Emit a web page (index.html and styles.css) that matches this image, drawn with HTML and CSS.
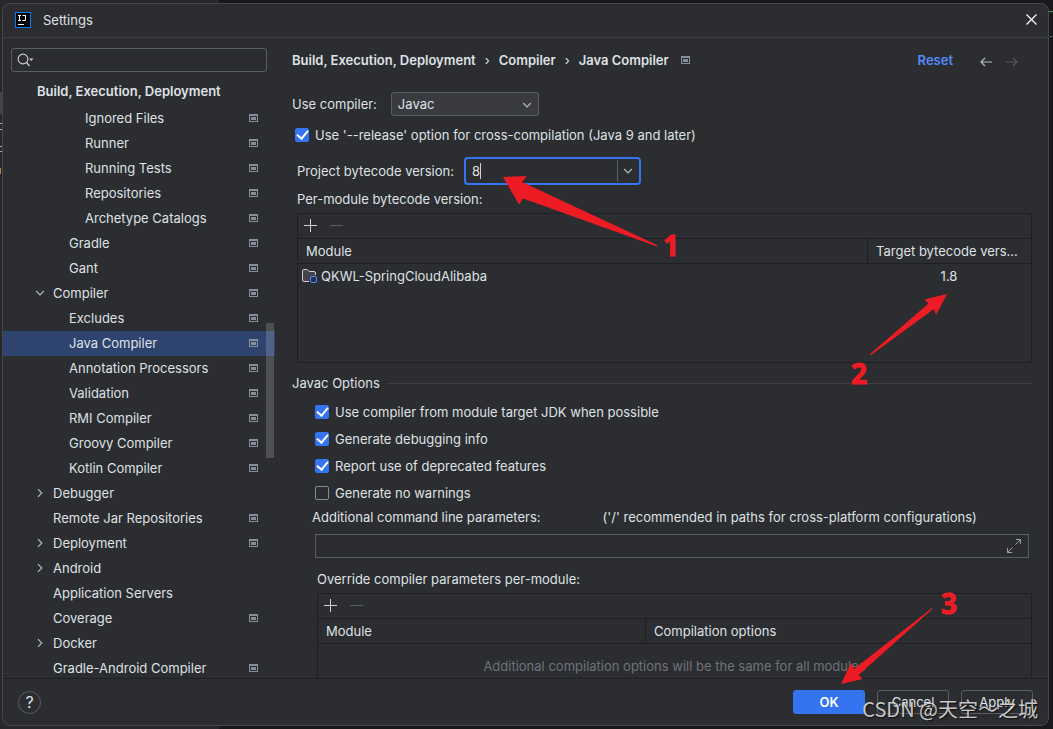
FILE: index.html
```html
<!DOCTYPE html>
<html lang="en">
<head>
<meta charset="utf-8">
<title>Settings</title>
<link rel="stylesheet" href="styles.css">
</head>
<body>
<svg class="defs" aria-hidden="true">
  <symbol id="page" viewBox="0 0 9 8"><path fill="currentColor" fill-rule="evenodd" d="M0 0h9v8H0zM1 2v5h7V2z"/><path fill="currentColor" d="M2 3h5v3H2z"/></symbol>
  <symbol id="right" viewBox="0 0 10 10"><path d="M3 1.2 6.8 5 3 8.8" fill="none" stroke="currentColor" stroke-width="1.2"/></symbol>
  <symbol id="down" viewBox="0 0 10 10"><path d="M1.2 3 5 6.8 8.8 3" fill="none" stroke="currentColor" stroke-width="1.2"/></symbol>
  <symbol id="plus" viewBox="0 0 13 13"><path d="M6.5 0v13M0 6.5h13" stroke="currentColor"/></symbol>
  <symbol id="minus" viewBox="0 0 13 13"><path d="M0 6.5h13" stroke="currentColor"/></symbol>
</svg>
<div class="dialog">
  <header class="titlebar">
    <svg class="logo" viewBox="0 0 16 16"><rect width="16" height="16" fill="#087cfa"/><rect x="1" y="1" width="14" height="14" fill="#000"/><path d="M3 3.500h3M4.500 3.500v4.500M3 8.500h3M7.500 3.500h3.500M10.500 3.500v4q0 1-1 1H7.500M3 12.500h6" fill="none" stroke="#fff" stroke-width="1.100"/></svg>
    <h1>Settings</h1>
    <button class="plain close" aria-label="Close"><svg viewBox="0 0 11 11"><path d="M.5.5l10 10M10.500.500l-10 10" stroke="#fff" stroke-width="1.200"/></svg></button>
  </header>
  <div class="body">
    <nav class="sidebar">
      <label class="search">
        <svg viewBox="0 0 17 14"><circle cx="6" cy="6" r="4.900" fill="none" stroke="#ced0d6" stroke-width="1.100"/><path d="M9.500 9.500l3 3.500" stroke="#ced0d6" stroke-width="1.200"/><path d="M12 5.500h4.500l-2.250 2.500z" fill="#ced0d6"/></svg>
        <input type="text" aria-label="Search settings">
      </label>
      <h2>Build, Execution, Deployment</h2>
      <div class="scroll">
        <ul class="tree">
          <li class="l3"><span>Ignored Files</span><svg class="page"><use href="#page"/></svg></li>
          <li class="l3"><span>Runner</span><svg class="page"><use href="#page"/></svg></li>
          <li class="l3"><span>Running Tests</span><svg class="page"><use href="#page"/></svg></li>
          <li class="l3"><span>Repositories</span><svg class="page"><use href="#page"/></svg></li>
          <li class="l3"><span>Archetype Catalogs</span><svg class="page"><use href="#page"/></svg></li>
          <li class="l2"><span>Gradle</span><svg class="page"><use href="#page"/></svg></li>
          <li class="l2"><span>Gant</span><svg class="page"><use href="#page"/></svg></li>
          <li class="parent"><svg class="chev"><use href="#down"/></svg><span>Compiler</span><svg class="page"><use href="#page"/></svg></li>
          <li class="l2"><span>Excludes</span><svg class="page"><use href="#page"/></svg></li>
          <li class="l2 selected"><span>Java Compiler</span><svg class="page"><use href="#page"/></svg></li>
          <li class="l2"><span>Annotation Processors</span><svg class="page"><use href="#page"/></svg></li>
          <li class="l2"><span>Validation</span><svg class="page"><use href="#page"/></svg></li>
          <li class="l2"><span>RMI Compiler</span><svg class="page"><use href="#page"/></svg></li>
          <li class="l2"><span>Groovy Compiler</span><svg class="page"><use href="#page"/></svg></li>
          <li class="l2"><span>Kotlin Compiler</span><svg class="page"><use href="#page"/></svg></li>
          <li class="parent"><svg class="chev"><use href="#right"/></svg><span>Debugger</span></li>
          <li><span>Remote Jar Repositories</span><svg class="page"><use href="#page"/></svg></li>
          <li class="parent"><svg class="chev"><use href="#right"/></svg><span>Deployment</span><svg class="page"><use href="#page"/></svg></li>
          <li class="parent"><svg class="chev"><use href="#right"/></svg><span>Android</span></li>
          <li><span>Application Servers</span></li>
          <li><span>Coverage</span><svg class="page"><use href="#page"/></svg></li>
          <li class="parent"><svg class="chev"><use href="#right"/></svg><span>Docker</span></li>
          <li><span>Gradle-Android Compiler</span><svg class="page"><use href="#page"/></svg></li>
        </ul>
        <div class="thumb"></div>
      </div>
    </nav>
    <main class="main">
      <div class="crumbs">
        <b>Build, Execution, Deployment</b><i>›</i><b>Compiler</b><i>›</i><b>Java Compiler</b>
        <svg class="page"><use href="#page"/></svg>
        <a class="reset" href="#">Reset</a>
        <button class="plain" aria-label="Back"><svg class="arrow" viewBox="0 0 12 10"><path d="M12 5H1M5 1 1 5l4 4" fill="none" stroke="#b4b8bf" stroke-width="1.200"/></svg></button>
        <button class="plain" aria-label="Forward"><svg class="arrow" viewBox="0 0 12 10"><path d="M0 5h11M7 1l4 4-4 4" fill="none" stroke="#55575c" stroke-width="1.200"/></svg></button>
      </div>
      <div class="row compiler">
        <label for="compiler">Use compiler:</label>
        <span class="select"><select id="compiler"><option>Javac</option></select><svg class="chev"><use href="#down"/></svg></span>
      </div>
      <label class="check release"><input type="checkbox" checked>Use '--release' option for cross-compilation (Java 9 and later)</label>
      <div class="row project">
        <label for="version">Project bytecode version:</label>
        <span class="combo"><input id="version" type="text" value="8"><span class="caret"></span><button class="plain" aria-label="Show versions"><svg class="chev"><use href="#down"/></svg></button></span>
      </div>
      <p class="caption">Per-module bytecode version:</p>
      <section class="panel modules">
        <div class="tools"><button class="plain" aria-label="Add module"><svg><use href="#plus"/></svg></button><button class="plain off" aria-label="Remove module"><svg><use href="#minus"/></svg></button></div>
        <table>
          <thead><tr><th>Module</th><th class="target">Target bytecode vers...</th></tr></thead>
          <tbody><tr><td><span class="module"><svg viewBox="0 0 16 16"><path d="M7 13.500H2q-1.500 0-1.500-1.500V3Q.5 1.500 2 1.500h3.200l2 2H12q1.500 0 1.500 1.500v2" fill="#43454a" stroke="#ced0d6"/><rect x="8.500" y="8.500" width="6" height="6" rx="1.500" fill="#25324d" stroke="#548af7"/></svg>QKWL-SpringCloudAlibaba</span></td><td class="center">1.8</td></tr></tbody>
        </table>
      </section>
      <h3><span>Javac Options</span></h3>
      <div class="checks">
        <label class="check"><input type="checkbox" checked>Use compiler from module target JDK when possible</label>
        <label class="check"><input type="checkbox" checked>Generate debugging info</label>
        <label class="check"><input type="checkbox" checked>Report use of deprecated features</label>
        <label class="check"><input type="checkbox">Generate no warnings</label>
      </div>
      <div class="row params"><label for="params">Additional command line parameters:</label><span>('/' recommended in paths for cross-platform configurations)</span></div>
      <div class="expand">
        <input id="params" type="text">
        <button class="plain" aria-label="Expand"><svg viewBox="0 0 14 14"><path d="M8.500 5.500l5-5M9 .5h4.500V5M5.500 8.500l-5 5M.5 9v4.500H5" fill="none" stroke="#9da0a8"/></svg></button>
      </div>
      <p class="caption override">Override compiler parameters per-module:</p>
      <section class="panel overrides">
        <div class="tools"><button class="plain" aria-label="Add override"><svg><use href="#plus"/></svg></button><button class="plain off" aria-label="Remove override"><svg><use href="#minus"/></svg></button></div>
        <table>
          <thead><tr><th class="name">Module</th><th>Compilation options</th></tr></thead>
          <tbody><tr><td colspan="2" class="empty">Additional compilation options will be the same for all modules</td></tr></tbody>
        </table>
      </section>
    </main>
  </div>
  <footer class="footer">
    <button class="help" aria-label="Help">?</button>
    <button class="btn primary">OK</button>
    <button class="btn">Cancel</button>
    <button class="btn">Apply</button>
  </footer>
</div>
<svg class="marks" viewBox="0 0 1053 729">
  <path d="M1049 11.500h4M1050 36.500h2" stroke="#57965c"/>
  <path d="M0 92h2v22H0z" fill="#43454a"/>
  <path d="M0 123.500h2M0 129.500h2M0 146.500h2M0 151.500h2" stroke="#a9abb0"/>
  <path d="M0 168h1v6H0z" fill="#c77d3b"/>
  <g fill="#ed1c24">
    <path d="M503 177l24-1-5 6 135 63v1.500L523 198.500l-4 6z"/>
    <path d="M947 294l-11 21-2-6-63 46-1.500-.5 59-51-4-4z"/>
    <path d="M841 684l10-21 3 6 78-61 .5 1-74 66 4 4z"/>
    <text x="663" y="256">1</text><text x="851" y="384">2</text><text x="941" y="614">3</text>
  </g>
</svg>
<div class="watermark">CSDN @天空～之城</div>
</body>
</html>
```

FILE: styles.css
```css
* { box-sizing: border-box; }
body { margin: 0; height: 100vh; padding: 3px 4px 3px 2px; overflow: hidden; background: linear-gradient(90deg, #26282b 219px, #18191b 219px); color: #dfe1e5; font: 13px/16px Inter, "Noto Sans", sans-serif; }
h1, h2, h3, p, ul { margin: 0; padding: 0; font-size: 13px; font-weight: 400; }
input, select, button { font: inherit; color: inherit; }
svg { display: block; flex: none; }
.defs { position: absolute; width: 0; height: 0; }
.plain { display: flex; padding: 0; border: 0; background: none; }
.page { width: 9px; height: 8px; color: #868e99; }
.chev { width: 10px; height: 10px; color: #b4b8bf; }

.dialog { height: 100%; display: flex; flex-direction: column; overflow: hidden; border: 1px solid #45474b; border-radius: 8px; background: #2b2d30; }
.titlebar { flex: none; height: 34px; display: flex; align-items: center; gap: 12px; padding: 0 11px 2px 12px; border-bottom: 1px solid #3c3e41; }
.logo { width: 16px; height: 16px; }
.close { margin-left: auto; }
.close svg { width: 11px; height: 11px; }
.body { flex: 1; min-height: 0; display: flex; }

.sidebar { flex: none; width: 272px; display: flex; flex-direction: column; padding-top: 10px; }
.search { flex: none; height: 24px; margin: 0 8px; padding: 0 5px; display: flex; align-items: center; gap: 4px; border: 1px solid #5a5d63; border-radius: 3px; }
.search svg { width: 17px; height: 14px; }
.search input { flex: 1; min-width: 0; border: 0; outline: 0; background: none; }
.sidebar h2 { padding: 11px 0 7px 34px; font-weight: 600; }
.scroll { position: relative; flex: 1; min-height: 0; overflow: hidden; }
.tree { list-style: none; }
.tree li { height: 25px; display: flex; align-items: center; padding: 0 17px 2px 50px; }
.tree .parent { padding-left: 32px; gap: 8px; }
.tree .l2 { padding-left: 66px; }
.tree .l3 { padding-left: 82px; }
.tree .selected { background: #2e436e; }
.tree .page { margin-left: auto; }
.thumb { position: absolute; right: 1px; top: 217px; width: 8px; height: 135px; background: rgba(255, 255, 255, .17); }

.main { flex: 1; min-width: 0; overflow: hidden; padding: 13px 16px 0 17px; }
.crumbs { display: flex; align-items: center; height: 18px; }
.crumbs b { font-weight: 600; }
.crumbs i { width: 23px; text-align: center; font-style: normal; }
.crumbs .page { margin-left: 12px; }
.reset { margin-left: auto; margin-right: 27px; color: #548af7; font-weight: 600; text-decoration: none; }
.arrow { width: 12px; height: 10px; margin-top: 3px; }
.crumbs button + button { margin: 0 14px 0 14px; }
.row { display: flex; align-items: center; }
.compiler { gap: 14px; margin-top: 23px; }
.select { position: relative; width: 148px; }
.select select { display: block; appearance: none; width: 100%; height: 24px; padding: 0 6px; border: 1px solid #5a5d63; border-radius: 3px; background: #393b40; }
.select .chev { position: absolute; right: 7px; top: 8px; pointer-events: none; }
.check { display: flex; align-items: center; gap: 6px; height: 27px; }
.check input { appearance: none; flex: none; display: flex; align-items: center; justify-content: center; width: 14px; height: 14px; margin: 0; border: 1px solid #868a91; border-radius: 2px; }
.check input:checked { border-color: #3574f0; background: #3574f0; }
.check input:checked::after { content: ""; width: 5px; height: 9px; border: solid #fff; border-width: 0 2px 2px 0; transform: translateY(-1px) rotate(40deg); }
.release { margin: 5px 0 0 3px; }
.project { margin: 9px 0 0 5px; gap: 10px; }
.combo { position: relative; display: flex; width: 177px; height: 28px; border: 2px solid #3574f0; border-radius: 4px; }
.combo input { flex: 1; min-width: 0; padding: 0 6px; border: 0; outline: 0; background: none; }
.caret { position: absolute; left: 14px; top: 4px; width: 1px; height: 16px; background: #ced0d6; }
.combo button { width: 22px; margin: 1px 0; align-items: center; justify-content: center; border-left: 1px solid #5a5d63; }
.caption { margin: 6px 0 0 5px; }

.panel { border: 1px solid #1e1f22; }
.modules { height: 150px; margin: 6px 0 0 5px; }
.tools { height: 25px; display: flex; align-items: center; gap: 13px; padding: 0 0 1px 6px; border-bottom: 1px solid #1e1f22; color: #ced0d6; }
.tools svg { width: 13px; height: 13px; }
.tools .off { color: #5a5d63; }
table { width: 100%; border-spacing: 0; table-layout: fixed; }
th, td { padding: 0 8px; height: 25px; text-align: left; font-weight: 400; white-space: nowrap; }
th { border-bottom: 1px solid #1e1f22; }
th + th { border-left: 1px solid #1e1f22; }
.target { width: 164px; }
.name { width: 327px; }
td { padding: 0 4px 1px; }
.module { display: flex; align-items: center; gap: 3px; }
.module svg { width: 16px; height: 16px; }
td.center { text-align: center; }
h3 { display: flex; align-items: center; gap: 7px; margin-top: 12px; }
h3::after { content: ""; flex: 1; height: 1px; background: #3c3e41; }
.checks { margin: 7px 0 0 23px; }
.params { margin: 3px 0 0 20px; gap: 62px; }
.expand { display: flex; align-items: center; height: 24px; margin: 9px 3px 0 23px; padding-right: 7px; border: 1px solid #5a5d63; }
.expand input { flex: 1; min-width: 0; border: 0; outline: 0; background: none; }
.expand svg { width: 14px; height: 14px; }
.override { margin: 13px 0 0 25px; }
.overrides { height: 150px; margin: 6px 0 0 25px; }
td.empty { height: 45px; text-align: center; color: #6f737a; }

.footer { flex: none; height: 47px; display: flex; align-items: center; gap: 12px; padding: 0 15px; border-top: 1px solid #1e1f22; }
.help { width: 23px; height: 23px; margin-right: auto; padding: 0; border: 1px solid #5a5d63; border-radius: 50%; background: none; font-size: 16px; }
.btn { width: 72px; height: 24px; padding: 0; border: 1px solid #5a5d63; border-radius: 3px; background: none; }
.primary { border-color: #3574f0; background: #3574f0; color: #fff; font-weight: 600; }

.marks { position: absolute; left: 0; top: 0; width: 1053px; height: 729px; pointer-events: none; }
.marks text { font: 700 28px "Noto Sans", sans-serif; stroke: #ed1c24; stroke-width: 1; }
.watermark { position: absolute; right: 15px; bottom: 7px; color: rgba(230, 230, 230, .85); font: 20px/26px "Noto Sans CJK SC", sans-serif; text-shadow: 1px 1px 1px #111; white-space: nowrap; pointer-events: none; }
```
